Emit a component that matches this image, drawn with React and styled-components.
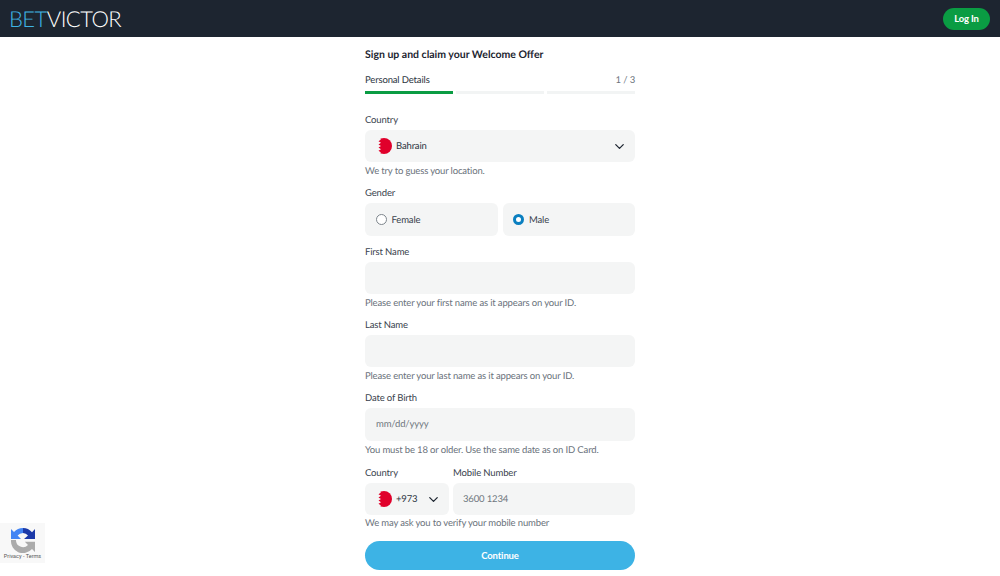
import React from "react";
import styled, { createGlobalStyle } from "styled-components";
import { LuChevronDown } from "react-icons/lu";

const GlobalStyle = createGlobalStyle`
  html, body {
    margin: 0;
    padding: 0;
    background: #fff;
    font-family: Lato, "Open Sans", sans-serif;
    color: #2b3440;
    overflow: hidden;
    text-rendering: geometricPrecision;
  }
  * { box-sizing: border-box; }
`;

function BahrainFlag() {
  return (
    <svg width="16" height="16" viewBox="0 0 16 16">
      <circle cx="8" cy="8" r="8" fill="#e0002b" />
      <path
        d="M0 0H2.500L5 1.600 2.500 3.200 5 4.800 2.500 6.400 5 8 2.500 9.600 5 11.200 2.500 12.800 5 14.400 2.500 16H0Z"
        fill="#f4f5f5"
      />
    </svg>
  );
}

function RecaptchaLogo() {
  return (
    <svg width="26" height="26" viewBox="0 0 26 26">
      <path d="M13 1a12 12 0 0 1 9 4.200L25 2v10H14l4-3.600A7 7 0 0 0 13 6Z" fill="#1c3aa9" />
      <path d="M13 1v5a7 7 0 0 0-5.400 2.600L11 12H1V2l3 3a12 12 0 0 1 9-4Z" fill="#4285f4" />
      <path d="M1 13h5a7 7 0 0 0 12 5l-3.200-3.200H25V25l-3-3A12 12 0 0 1 1 13Z" fill="#ababab" />
    </svg>
  );
}

export default function App() {
  return (
    <>
      <GlobalStyle />
      <Header>
        <Logo>
          <LogoBet>BET</LogoBet>VICTOR
        </Logo>
        <LoginButton>Log In</LoginButton>
      </Header>
      <Form>
        <Title>Sign up and claim your Welcome Offer</Title>
        <StepRow>
          <span>Personal Details</span>
          <StepCount>1 / 3</StepCount>
        </StepRow>
        <Progress>
          <ProgressPart $active />
          <ProgressPart />
          <ProgressPart />
        </Progress>

        <Label $first>Country</Label>
        <Box>
          <BahrainFlag />
          <BoxText>Bahrain</BoxText>
          <Chevron />
        </Box>
        <Hint>We try to guess your location.</Hint>

        <Label>Gender</Label>
        <RadioRow>
          <RadioBox>
            <RadioDot />
            <RadioText>Female</RadioText>
          </RadioBox>
          <RadioBox>
            <RadioDot $checked />
            <RadioText>Male</RadioText>
          </RadioBox>
        </RadioRow>

        <Label $afterBox>First Name</Label>
        <Box />
        <Hint>Please enter your first name as it appears on your ID.</Hint>

        <Label>Last Name</Label>
        <Box />
        <Hint>Please enter your last name as it appears on your ID.</Hint>

        <Label>Date of Birth</Label>
        <Box $tall>
          <Placeholder>mm/dd/yyyy</Placeholder>
        </Box>
        <Hint>You must be 18 or older. Use the same date as on ID Card.</Hint>

        <PhoneRow>
          <PhoneCol $width="84px">
            <Label $phone>Country</Label>
            <Box>
              <BahrainFlag />
              <BoxText>+973</BoxText>
              <Chevron />
            </Box>
          </PhoneCol>
          <PhoneCol>
            <Label $phone>Mobile Number</Label>
            <Box $narrow>
              <Placeholder>3600 1234</Placeholder>
            </Box>
          </PhoneCol>
        </PhoneRow>
        <Hint $tight>We may ask you to verify your mobile number</Hint>

        <ContinueButton>Continue</ContinueButton>
      </Form>
      <Recaptcha>
        <RecaptchaLogo />
        <RecaptchaText>Privacy - Terms</RecaptchaText>
      </Recaptcha>
    </>
  );
}

const Header = styled.header`
  height: 37px;
  background: #1d2530;
  display: flex;
  align-items: center;
  justify-content: space-between;
  padding: 0 10px;
`;

const Logo = styled.div`
  font-size: 22px;
  font-weight: 300;
  letter-spacing: -0.55px;
  margin-left: -1px;
  color: #fff;
  line-height: 1;
`;

const LogoBet = styled.span`
  color: #3fb4e5;
`;

const LoginButton = styled.button`
  width: 47px;
  height: 22px;
  border: 0;
  border-radius: 11px;
  background: #0a9c43;
  color: #fff;
  font: 700 9.5px Lato, sans-serif;
  letter-spacing: -0.15px;
  padding: 0;
`;

const Form = styled.main`
  width: 270px;
  margin: 0 auto;
  display: flex;
  flex-direction: column;
  letter-spacing: -0.15px;
`;

const Title = styled.h1`
  margin: 12px 0 0;
  font-size: 10.5px;
  line-height: 13px;
  font-weight: 700;
  letter-spacing: 0;
  color: #1d2530;
`;

const StepRow = styled.div`
  display: flex;
  justify-content: space-between;
  margin-top: 12px;
  font-size: 9.5px;
  line-height: 13px;
`;

const StepCount = styled.span`
  color: #6c747d;
`;

const Progress = styled.div`
  display: flex;
  gap: 3px;
  margin-top: 4px;
`;

const ProgressPart = styled.div`
  flex: 1;
  height: 3px;
  background: ${(p) => (p.$active ? "#0a9c43" : "#f2f4f4")};
`;

const Label = styled.div`
  font-size: 9.5px;
  line-height: 13px;
  margin-top: ${(p) => (p.$first ? "20px" : p.$afterBox ? "10px" : p.$phone ? "0" : "9px")};
  margin-bottom: 3px;
  color: #39424d;
`;

const Box = styled.div`
  height: ${(p) => (p.$tall ? "33px" : "32px")};
  background: #f4f5f5;
  border-radius: 6px;
  display: flex;
  align-items: center;
  padding: 0 8px 0 ${(p) => (p.$narrow ? "10px" : "11px")};
  font-size: 9.5px;
`;

const BoxText = styled.span`
  margin-left: 4px;
  margin-right: auto;
  color: #2b3440;
`;

const Chevron = styled(LuChevronDown)`
  width: 15px;
  height: 15px;
  color: #1d2530;
`;

const Placeholder = styled.span`
  color: #707880;
`;

const Hint = styled.div`
  font-size: 9.5px;
  line-height: 13px;
  margin-top: ${(p) => (p.$tight ? "2px" : "3px")};
  color: #6a727b;
`;

const RadioRow = styled.div`
  display: grid;
  grid-template-columns: 1fr 1fr;
  gap: 5px;
`;

const RadioBox = styled.div`
  height: 33px;
  background: #f4f5f5;
  border-radius: 6px;
  display: flex;
  align-items: center;
  padding-left: 10.5px;
  gap: 5px;
  font-size: 9.5px;
  color: #39424d;
`;

const RadioText = styled.span`
  padding-top: 1px;
`;

const RadioDot = styled.span`
  width: 11px;
  height: 11px;
  border-radius: 50%;
  background: #fff;
  border: ${(p) => (p.$checked ? "3px solid #0a7fc0" : "1px solid #7d858c")};
`;

const PhoneRow = styled.div`
  display: flex;
  gap: 4px;
  margin-top: 10px;
`;

const PhoneCol = styled.div`
  display: flex;
  flex-direction: column;
  flex: ${(p) => (p.$width ? `0 0 ${p.$width}` : "1")};
`;

const ContinueButton = styled.button`
  height: 29px;
  margin-top: 11px;
  border: 0;
  border-radius: 15px;
  background: #3db3e5;
  color: #fff;
  font: 700 9.5px Lato, sans-serif;
  letter-spacing: -0.15px;
`;

const Recaptcha = styled.div`
  position: fixed;
  left: 0;
  top: 523px;
  width: 45px;
  height: 40px;
  background: #f8f8f8;
  display: flex;
  flex-direction: column;
  align-items: center;
  padding-top: 4px;
`;

const RecaptchaText = styled.div`
  font: 5.5px/7px Roboto, sans-serif;
  color: #555;
  white-space: nowrap;
  margin-top: 1px;
`;
